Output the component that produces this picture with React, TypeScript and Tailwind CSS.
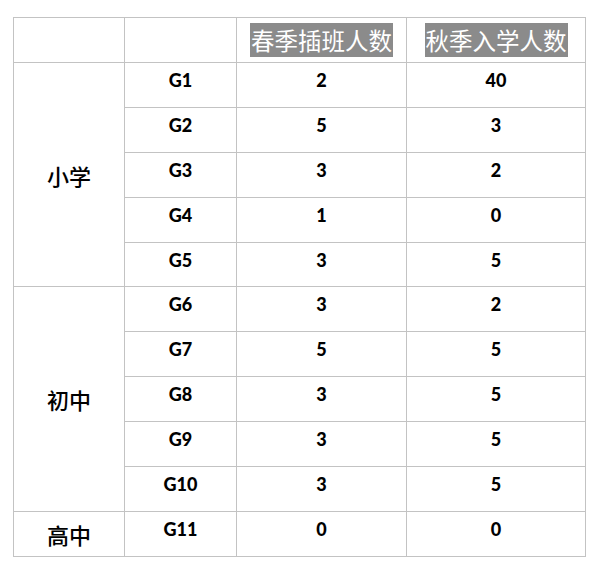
const groups = [
  {
    name: "小学",
    rows: [
      ["G1", "2", "40"],
      ["G2", "5", "3"],
      ["G3", "3", "2"],
      ["G4", "1", "0"],
      ["G5", "3", "5"],
    ],
  },
  {
    name: "初中",
    rows: [
      ["G6", "3", "2"],
      ["G7", "5", "5"],
      ["G8", "3", "5"],
      ["G9", "3", "5"],
      ["G10", "3", "5"],
    ],
  },
  {
    name: "高中",
    rows: [["G11", "0", "0"]],
  },
];

const cjk = "font-['Noto_Sans_CJK_SC',sans-serif]";
const cell = "border border-[#c3c3c3] p-0 text-center";
const data = "align-top pt-[5px] leading-[24px] text-[18px] font-black text-black font-['Lato','Liberation_Sans',sans-serif]";

export default function App() {
  return (
    <div className="w-[600px] h-[569px] bg-white pt-[17px] pl-[13px]">
      <table className="border-collapse table-fixed w-[572px]">
        <colgroup>
          <col className="w-[111px]" />
          <col className="w-[112px]" />
          <col className="w-[170px]" />
          <col className="w-[179px]" />
        </colgroup>
        <thead>
          <tr className="h-[45px]">
            <th className={cell}></th>
            <th className={cell}></th>
            <th className={`${cell} align-middle`}>
              <span className={`${cjk} inline-block bg-[#8b8b8b] px-px text-[23.5px] leading-[34px] font-normal text-white`}>
                春季插班人数
              </span>
            </th>
            <th className={`${cell} align-middle`}>
              <span className={`${cjk} inline-block bg-[#8b8b8b] px-px text-[23.5px] leading-[34px] font-normal text-white`}>
                秋季入学人数
              </span>
            </th>
          </tr>
        </thead>
        <tbody>
          {groups.map((g) =>
            g.rows.map((r, i) => (
              <tr key={r[0]} className="h-[44.9px]">
                {i === 0 && (
                  <td
                    rowSpan={g.rows.length}
                    className={`${cell} ${cjk} align-middle text-[22px] leading-[30px] font-medium text-black`}
                  >
                    {g.name}
                  </td>
                )}
                {r.map((v, j) => (
                  <td key={j} className={`${cell} ${data}`}>
                    {v}
                  </td>
                ))}
              </tr>
            ))
          )}
        </tbody>
      </table>
    </div>
  );
}
